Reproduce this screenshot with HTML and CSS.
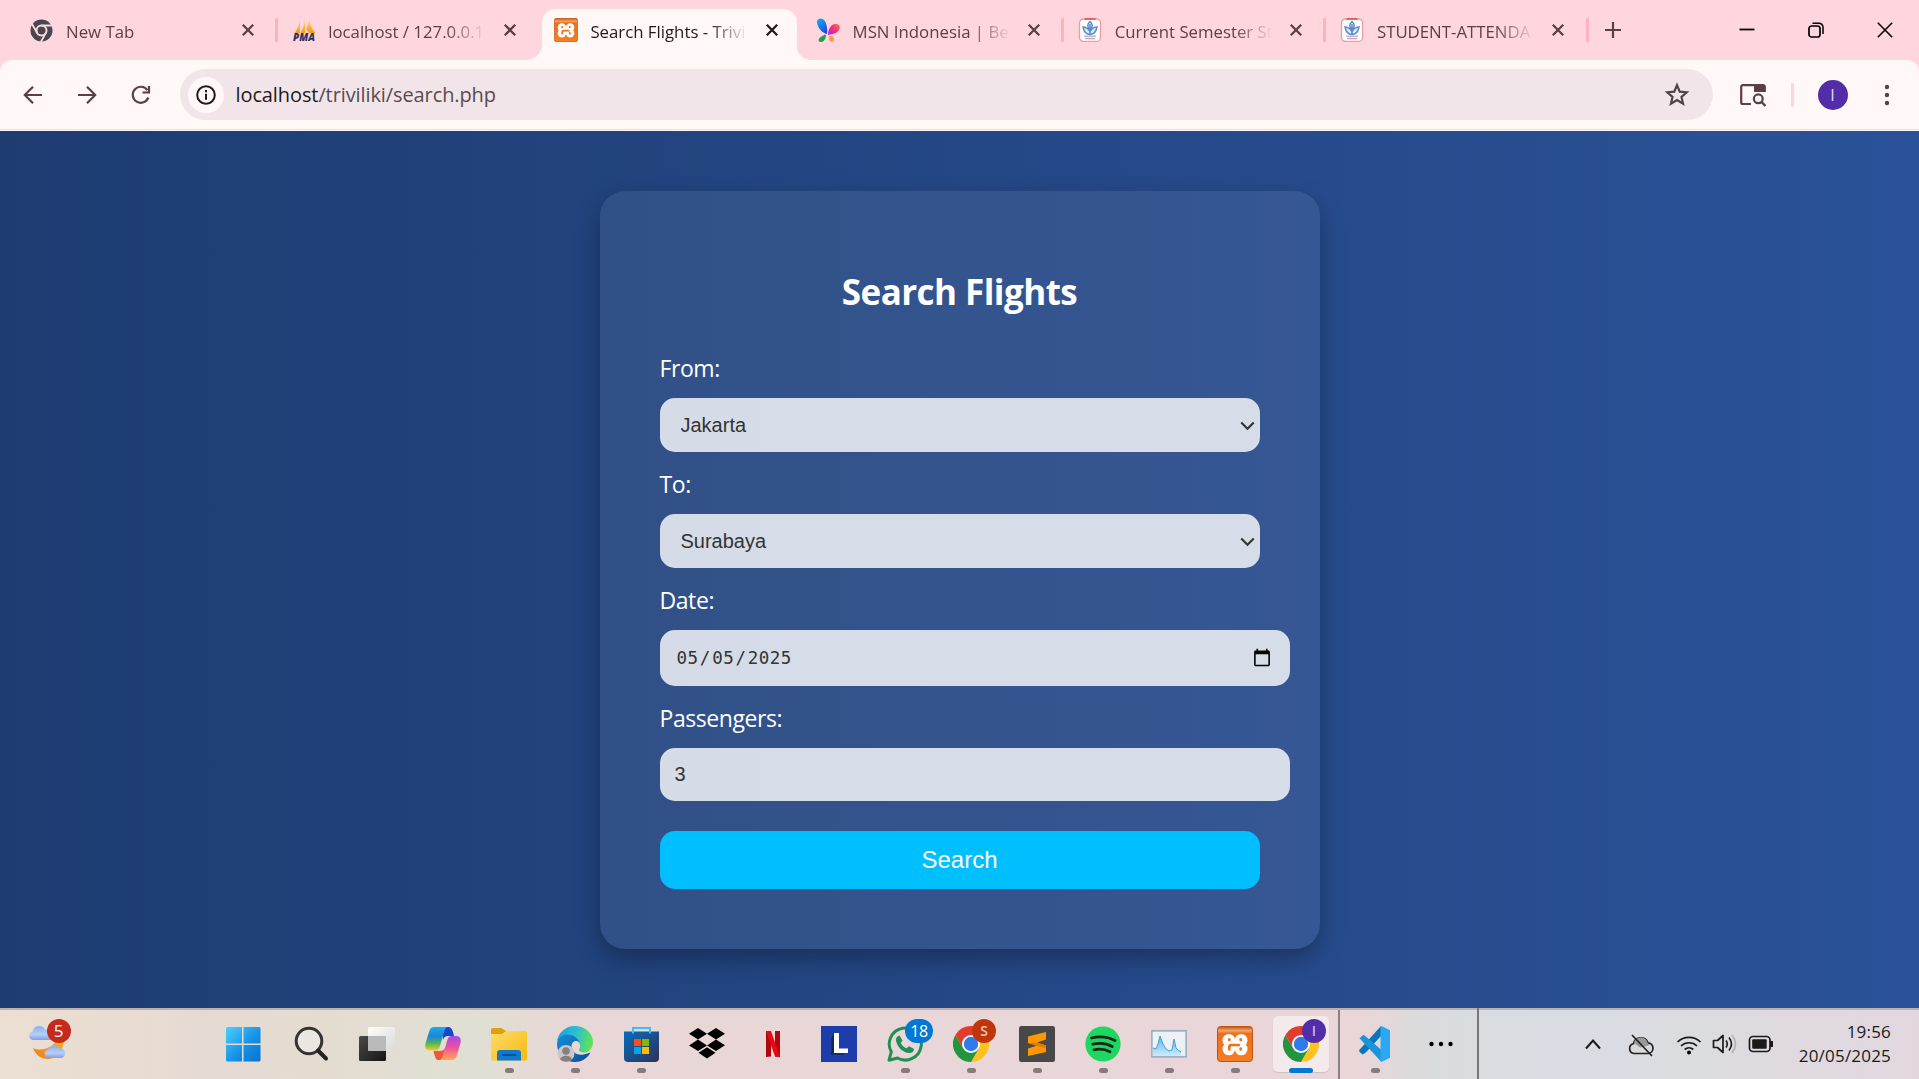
FILE: index.html
```html
<!DOCTYPE html>
<html lang="en">
<head>
<meta charset="utf-8">
<title>Search Flights - Triviliki</title>
<link rel="stylesheet" href="styles.css">
</head>
<body>
<svg class="defs" aria-hidden="true">
  <defs>
    <linearGradient id="xo" x1="0" y1="0" x2="0" y2="1"><stop offset="0" stop-color="#c0560f"/><stop offset=".12" stop-color="#f3a36a"/><stop offset=".2" stop-color="#ee6f1a"/><stop offset="1" stop-color="#f57c24"/></linearGradient>
    <linearGradient id="win" x1="0" y1="0" x2="1" y2="1"><stop offset="0" stop-color="#4fd0ff"/><stop offset=".55" stop-color="#1593e6"/><stop offset="1" stop-color="#0473cf"/></linearGradient>
    <linearGradient id="dark" x1="0" y1="0" x2="1" y2="1"><stop offset="0" stop-color="#4a4a4a"/><stop offset="1" stop-color="#151515"/></linearGradient>
    <linearGradient id="white" x1="0" y1="0" x2="1" y2="1"><stop offset="0" stop-color="#fff"/><stop offset="1" stop-color="#dadada"/></linearGradient>
    <linearGradient id="moon" x1="1" y1="0" x2="0" y2="1"><stop offset="0" stop-color="#f5b829"/><stop offset="1" stop-color="#f07c1c"/></linearGradient>
    <linearGradient id="cloud" x1="0" y1="0" x2="0" y2="1"><stop offset="0" stop-color="#8ab0f2"/><stop offset=".6" stop-color="#b4cff8"/><stop offset="1" stop-color="#7f9fe6"/></linearGradient>
    <linearGradient id="copA" x1="0" y1="0" x2="0" y2="1"><stop offset="0" stop-color="#1fa8f0"/><stop offset=".4" stop-color="#1a86d8"/><stop offset=".7" stop-color="#55b558"/><stop offset="1" stop-color="#f3d01a"/></linearGradient>
    <linearGradient id="copB" x1="0" y1="0" x2="0" y2="1"><stop offset="0" stop-color="#a24be8"/><stop offset=".5" stop-color="#f0529b"/><stop offset="1" stop-color="#ffa94f"/></linearGradient>
    <linearGradient id="fold" x1="0" y1="0" x2="1" y2="1"><stop offset="0" stop-color="#ffdc6b"/><stop offset="1" stop-color="#f8b90e"/></linearGradient>
    <linearGradient id="edgeA" x1="0" y1=".3" x2="1" y2=".5"><stop offset="0" stop-color="#1b9fe0"/><stop offset=".5" stop-color="#2bc0cf"/><stop offset="1" stop-color="#63e34e"/></linearGradient>
    <linearGradient id="edgeB" x1="0" y1="0" x2="1" y2="1"><stop offset="0" stop-color="#1390da"/><stop offset="1" stop-color="#0c4a94"/></linearGradient>
    <linearGradient id="store" x1="0" y1="0" x2="1" y2="1"><stop offset="0" stop-color="#0a6cbd"/><stop offset="1" stop-color="#2b3358"/></linearGradient>
    <linearGradient id="perf" x1="0" y1="0" x2="0" y2="1"><stop offset="0" stop-color="#58b8ee"/><stop offset="1" stop-color="#cdeafb"/></linearGradient>
    <linearGradient id="msnA" x1="0" y1="0" x2=".6" y2="1"><stop offset="0" stop-color="#17b3f0"/><stop offset="1" stop-color="#1d4fe0"/></linearGradient>
    <linearGradient id="msnB" x1="1" y1="0" x2="0" y2="1"><stop offset="0" stop-color="#ff7a35"/><stop offset=".5" stop-color="#ee2f86"/><stop offset="1" stop-color="#b21fd8"/></linearGradient>
    <linearGradient id="sail" x1="0" y1="0" x2="0" y2="1"><stop offset="0" stop-color="#fbd9b0"/><stop offset="1" stop-color="#f89c0e"/></linearGradient>
  </defs>
  <symbol id="x" viewBox="0 0 14 14"><path d="M1.8 1.8 12.2 12.2M12.2 1.8 1.8 12.2" fill="none" stroke="currentColor" stroke-width="2.300"/></symbol>
  <symbol id="xampp" viewBox="0 0 36 36"><rect x=".5" y=".5" width="35" height="35" rx="3" fill="url(#xo)" stroke="#bd5510"/><g fill="#fff"><circle cx="11.800" cy="14.300" r="6.300"/><circle cx="24.200" cy="14.300" r="6.300"/><circle cx="11.800" cy="23" r="6.300"/><circle cx="24.200" cy="23" r="6.300"/><path d="M12 13.500h12v10H12z"/></g><path d="M12.300 13.300v.6M23.700 13.300v.6M12.300 23.500v-2.500q0-2 2-2h7.500M23.700 22.500v1" fill="none" stroke="#f0701a" stroke-width="2.700" stroke-linecap="round"/></symbol>
  <symbol id="uni" viewBox="0 0 24 24"><rect x="1.500" y="1" width="21" height="22.500" rx="4" fill="#fff" stroke="#ee9ba3" stroke-width="1.300"/><path d="M6.500 1h11" stroke="#d9534f" stroke-width="1.600"/><path d="M12 3.500c3 2.500 3 5.500 0 8-3-2.500-3-5.500 0-8zM5 9c1 5 4 7.500 7 7.500s6-2.500 7-7.500c-3 0-5 1.500-7 4.500C10 10.500 8 9 5 9zM12 6v11" fill="#dfeaf7" stroke="#5d8cc6" stroke-width="1.500"/><path d="M6 18.200h12" stroke="#8fb0da" stroke-width="1.200"/><path d="M7 20.500h10" stroke="#e59aa3" stroke-width="1.400"/></symbol>
  <symbol id="chrome" viewBox="0 0 36 36"><path d="M18 9h15.600A18 18 0 0 1 18 36l7.800-13.500z" fill="#fcc31e"/><path d="M25.800 22.500 18 36A18 18 0 0 1 2.400 9l7.800 13.500z" fill="#24953f"/><path d="M18 9h15.600A18 18 0 0 0 2.400 9l7.800 13.500z" fill="#e33b2e"/><circle cx="18" cy="18" r="9" fill="#fff"/><circle cx="18" cy="18" r="7.200" fill="#2f7bed"/></symbol>
</svg>

<header class="browser">
  <div class="tabstrip">
    <div class="tab">
      <svg class="favicon" viewBox="0 0 24 24"><circle cx="11.500" cy="12.500" r="11" fill="#45484d"/><circle cx="11.500" cy="12.500" r="5" fill="none" stroke="#ffd6de" stroke-width="2"/><path d="M11.500 7.500h10.500M7.200 15 2 6M15.800 15l-5 9" stroke="#ffd6de" stroke-width="1.800"/></svg>
      <span class="title">New Tab</span><svg class="close"><use href="#x"/></svg>
    </div>
    <div class="tab sep">
      <svg class="favicon" viewBox="0 0 24 24"><path d="M8 2v13H2.500Q7 9 8 2zM13 0v15H8.500Q12.500 8 13 0zM17.500 2q1 7 6 13H17q-3-4-3-4z" fill="url(#sail)"/><text x="1" y="23" textLength="22" lengthAdjust="spacingAndGlyphs" class="pma">PMA</text></svg>
      <span class="title">localhost / 127.0.0.1</span><svg class="close"><use href="#x"/></svg>
    </div>
    <div class="tab active">
      <svg class="favicon"><use href="#xampp"/></svg>
      <span class="title">Search Flights - Trivi</span><svg class="close"><use href="#x"/></svg>
    </div>
    <div class="tab">
      <svg class="favicon" viewBox="0 0 24 24"><path d="M1 5C0 0 6-1 8.500 2.500 11 6 11.500 11 11 16 6 15 2 10 1 5z" fill="url(#msnA)"/><path d="M12 17c0-6 3-10.500 7-11 4-.500 5.500 2 4.500 5-1.500 4-6 5-11.500 6z" fill="url(#msnB)"/><path d="M10 16.500c0 4-2 7.500-5 7.500-4 0-3.500-5 5-7.500z" fill="#1f9e50"/><path d="M13.500 17.500c3 0 5 2 4.500 4.500s-5 2.500-5-1z" fill="#ff9a3c"/></svg>
      <span class="title">MSN Indonesia | Be</span><svg class="close"><use href="#x"/></svg>
    </div>
    <div class="tab sep">
      <svg class="favicon"><use href="#uni"/></svg>
      <span class="title">Current Semester St</span><svg class="close"><use href="#x"/></svg>
    </div>
    <div class="tab sep last">
      <svg class="favicon"><use href="#uni"/></svg>
      <span class="title">STUDENT-ATTENDA</span><svg class="close"><use href="#x"/></svg>
    </div>
    <svg class="newtab" viewBox="0 0 16 16"><path d="M8 0v16M0 8h16" stroke="currentColor" stroke-width="2.200"/></svg>
    <div class="winctl">
      <svg viewBox="0 0 16 16"><path d="M.5 7.500h15" stroke="#000" stroke-width="1.800"/></svg>
      <svg viewBox="0 0 16 16"><rect x="1" y="4" width="11" height="11" rx="2.500" fill="none" stroke="#000" stroke-width="1.700"/><path d="M4.500 1.200H11a4 4 0 0 1 4 4V12" fill="none" stroke="#000" stroke-width="1.500"/></svg>
      <svg viewBox="0 0 16 16"><path d="M.8.8l14.400 14.400M15.200.8.8 15.200" stroke="#000" stroke-width="1.600"/></svg>
    </div>
  </div>
  <div class="toolbar">
    <svg class="nav" viewBox="0 0 20 20"><path d="M19 10H2.500M10 1.800 1.800 10l8.200 8.200" fill="none" stroke="currentColor" stroke-width="2.200"/></svg>
    <svg class="nav" viewBox="0 0 20 20"><path d="M1 10h16.500M10 1.800l8.200 8.200-8.200 8.200" fill="none" stroke="currentColor" stroke-width="2.200"/></svg>
    <svg class="nav" viewBox="0 0 20 20"><path d="M17.300 12.500A8 8 0 1 1 16.300 5.100M18 1v6.500h-6.500" fill="none" stroke="currentColor" stroke-width="2.200"/></svg>
    <div class="omnibox">
      <span class="info"><svg viewBox="0 0 20 20"><circle cx="10" cy="10" r="8.800" fill="none" stroke="#1f1a1b" stroke-width="2"/><path d="M10 8.800v6M10 5v2.200" stroke="#1f1a1b" stroke-width="2"/></svg></span>
      <span class="url"><b>localhost</b>/triviliki/search.php</span>
      <svg class="star" viewBox="0 0 24 24"><path d="M12 2.900l2.500 6 6.500.6-4.900 4.300 1.500 6.300-5.600-3.400-5.600 3.400 1.500-6.300L3 9.500l6.500-.6z" fill="none" stroke="#4d4246" stroke-width="2"/></svg>
    </div>
    <svg class="lens" viewBox="0 0 26 24"><path d="M11 21H2.800a1.600 1.600 0 0 1-1.600-1.600V3.800a1.600 1.600 0 0 1 1.600-1.600h20.400a1.600 1.600 0 0 1 1.600 1.600V9" fill="none" stroke="currentColor" stroke-width="2.200"/><path d="M14 2h11v7H14z" fill="currentColor"/><circle cx="18.300" cy="15.800" r="4.400" fill="none" stroke="currentColor" stroke-width="2.200"/><path d="M21.500 19l4 4" stroke="currentColor" stroke-width="2.400"/></svg>
    <i class="divider"></i>
    <span class="avatar">I</span>
    <svg class="dots" viewBox="0 0 6 22"><circle cx="3" cy="3" r="2.200"/><circle cx="3" cy="11" r="2.200"/><circle cx="3" cy="19" r="2.200"/></svg>
  </div>
</header>

<main class="page">
  <form class="card">
    <h2>Search Flights</h2>
    <label for="from">From:</label>
    <div class="select"><select id="from"><option>Jakarta</option></select><svg viewBox="0 0 12 8"><path d="M1 1.200l5 5 5-5"/></svg></div>
    <label for="to">To:</label>
    <div class="select"><select id="to"><option>Surabaya</option></select><svg viewBox="0 0 12 8"><path d="M1 1.200l5 5 5-5"/></svg></div>
    <label for="date">Date:</label>
    <input id="date" type="date" value="2025-05-05">
    <label for="pax">Passengers:</label>
    <input id="pax" type="number" value="3">
    <button type="button">Search</button>
  </form>
</main>

<footer class="taskbar">
  <div class="weather">
    <svg width="38" height="44" viewBox="0 0 38 44"><path d="M35 18c1 12-6 23-16 23C11 41 6 36 4 30c8 4 22 0 25-12z" fill="url(#moon)"/><path d="M4 22a4.200 4.200 0 0 1-.4-8.300A6.500 6.500 0 0 1 16 12a5 5 0 0 1 5 10z" fill="url(#cloud)"/><path d="M19.500 40a4.200 4.200 0 0 1-.4-8.300A6.200 6.200 0 0 1 30 30.500a4.900 4.900 0 0 1 2.500 9.500z" fill="url(#cloud)"/></svg>
    <span class="badge red">5</span>
  </div>
  <div class="apps">
    <span class="app start"><svg viewBox="0 0 36 36"><path d="M1 2.500A1.500 1.500 0 0 1 2.500 1H17v16.500H1zM18.500 1H34a1.500 1.500 0 0 1 1.500 1.500v15h-17zM1 19h16v16.500H2.500A1.500 1.500 0 0 1 1 34zM18.500 19h17v15a1.500 1.500 0 0 1-1.500 1.500H18.500z" fill="url(#win)"/></svg></span>
    <span class="app"><svg viewBox="0 0 36 36"><circle cx="16" cy="15" r="12.800" fill="#ece6e0" stroke="#333" stroke-width="3"/><path d="M25 24.500l8 8" stroke="#222" stroke-width="4" stroke-linecap="round"/></svg></span>
    <span class="app"><svg viewBox="0 0 36 36"><rect x="0" y="10" width="27" height="25" rx="1.500" fill="url(#dark)"/><rect x="9" y="1" width="27" height="24" rx="1.500" fill="url(#white)" opacity=".92"/><path d="M9 10h18v15H10.500A1.500 1.500 0 0 1 9 23.500z" fill="#b9b9b9"/></svg></span>
    <span class="app"><svg viewBox="0 0 36 36"><path d="M17 1h6c3 0 4 2 5 5l1 4h-6c-3 0-4 1-5 4z" fill="#1348c9"/><path d="M19 34h-5c-3 0-3.500-2-4.500-5l-1-4h6c3 0 5-1 6-4z" fill="#f2543c"/><path d="M9 1h14c-2 0-3 1.500-4 5l-4 14c-1 4-2.500 4.500-5 4.500H5c-4 0-5.500-3-4.500-7L4 6c1-3.500 2.500-5 5-5z" fill="url(#copA)"/><path d="M27 34H14c2 0 3-1.500 4-5l4-14c1-4 2.500-5 5-5h4c4 0 5.500 3 4.500 7L32 29c-1 3.500-2.500 5-5 5z" fill="url(#copB)"/></svg></span>
    <span class="app run"><svg viewBox="0 0 36 36"><path d="M0 4a2 2 0 0 1 2-2h8.500L15 5v5H0z" fill="#dfa00a"/><path d="M0 8h11l4-3h20a1 1 0 0 1 1 1v27a1.500 1.500 0 0 1-1.500 1.500h-33A1.500 1.500 0 0 1 0 33z" fill="url(#fold)"/><path d="M6 34.500V27a3 3 0 0 1 3-3h18a3 3 0 0 1 3 3v7.500z" fill="#0f78cf"/><path d="M11 29h14" stroke="#0a4f96" stroke-width="2"/></svg></span>
    <span class="app run"><svg viewBox="0 0 36 36"><path d="M0 15A18 18 0 0 1 18 0c10 0 18 7 18 16 0 6-4 10.500-9 10.500-3 0-5-1-5-2.500 0-1 1.200-1.500 1.200-4 0-3-3-6-8-7S4 11 0 15z" fill="url(#edgeA)"/><path d="M0 18c0-6 5-9.500 10-9.500 6 0 11 3.500 12.500 8-3-3-8-1-8 4 0 6 6 9 12 8 3-.5 5-1.500 7-2C30 33 24 36 18 36 8 36 0 28 0 18z" fill="url(#edgeB)"/><circle cx="9" cy="27.500" r="8.500" fill="#c9c6c4"/><circle cx="9" cy="25" r="3.800" fill="#85807d"/><path d="M3 33.500c1-5 11-5 12 0Q9 38 3 33.500z" fill="#85807d"/></svg></span>
    <span class="app run"><svg viewBox="0 0 36 36"><path d="M1 5.500h35V32a4 4 0 0 1-4 4H5a4 4 0 0 1-4-4z" fill="url(#store)"/><path d="M10 7.500V2h17v5.500" fill="none" stroke="#35c2f6" stroke-width="2"/><path d="M11 13h7v7h-7z" fill="#f25022"/><path d="M19 13h7v7h-7z" fill="#7fba00"/><path d="M11 21h7v7h-7z" fill="#00a4ef"/><path d="M19 21h7v7h-7z" fill="#ffb900"/></svg></span>
    <span class="app"><svg viewBox="0 0 36 36"><path d="M9 2l9 5.800-9 5.800-9-5.800zM27 2l9 5.800-9 5.800-9-5.800zM9 13.600l9 5.800-9 5.600-9-5.600zM27 13.600l9 5.600-9 5.800-9-5.600zM9.500 26.800l8.500-5.600 8.500 5.600-8.500 5.600z" fill="#000"/></svg></span>
    <span class="app"><svg viewBox="0 0 36 36"><path d="M11 5h5v25.500l-5 .5zM20 5h5v26l-5-.5z" fill="#b1060f"/><path d="M11 5h5l9 26-5-.5z" fill="#e50914"/></svg></span>
    <span class="app"><svg viewBox="0 0 36 36"><path d="M0 0h36v36H0z" fill="#1d3dab"/><path d="M13 7v19l-2.500 2V12z" fill="#0a2a55"/><path d="M10 28h13" stroke="#07304e" stroke-width="1.500"/><path d="M13 7h5v15.500h9V27H13z" fill="#fff"/></svg></span>
    <span class="app run"><svg viewBox="0 0 36 36"><path d="M2 34.200l2.300-8.400A16 16 0 1 1 10.500 32z" fill="none" stroke="#1f8f56" stroke-width="3" stroke-linejoin="round"/><path d="M12.500 9.500l3 5-1.700 2.400c1.300 2.700 3 4.300 5.800 5.400l2.400-2 5 2.700c0 3-2.700 4.600-5.500 4C15 26 10 20.500 9 14.500c-.2-2.500 1-4.500 3.500-5z" fill="#1f8f56"/></svg><em class="badge blue">18</em></span>
    <span class="app run"><svg><use href="#chrome"/></svg><em class="badge rust">S</em></span>
    <span class="app run"><svg viewBox="0 0 36 36"><rect width="36" height="36" rx="2.500" fill="#484848"/><path d="M27 6v7.500l-9 3 9 3v6.500L9 30v-7.500l8.500-2.700L9 17v-6.500z" fill="#ff9800"/><path d="M9 17l18 5.500v-3l-9-3z" fill="#e47d00"/></svg></span>
    <span class="app run"><svg viewBox="0 0 36 36"><circle cx="18" cy="18" r="17.600" fill="#1ed760"/><path d="M6.500 12c8-2 16-1.500 23.500 2.500M7.800 18.200c7-1.500 13.500-1 19.500 2.300M9 23.800c5.500-1.200 11-.8 16 2" fill="none" stroke="#14291b" stroke-width="2.800" stroke-linecap="round"/></svg></span>
    <span class="app run"><svg viewBox="0 0 36 36"><rect x=".8" y="4.800" width="34.400" height="26" fill="#edf1f5" stroke="#9fb0c0" stroke-width="1.800"/><path d="M2 30V22l3 1 2-5 2-8 3 8 3 5 3 2 3-1 2-11 2 9 2 2 3 2v4z" fill="url(#perf)"/><path d="M2 22l3 1 2-5 2-8 3 8 3 5 3 2 3-1 2-11 2 9 2 2 3 2" fill="none" stroke="#459fd8" stroke-width="1"/></svg></span>
    <span class="app run"><svg><use href="#xampp"/></svg></span>
    <span class="app run current"><svg><use href="#chrome"/></svg><em class="badge violet">I</em></span>
  </div>
  <i class="rule"></i>
  <div class="apps extra">
    <span class="app run"><svg viewBox="0 0 36 36"><path d="M24 0v10L8.500 26.800 5.500 28.500l-3-2.800q-.8-1 0-2z" fill="#0877b9"/><path d="M2.500 12.300 5.500 9.500q1-.8 2.200 0L24.500 24v12z" fill="#1a94da"/><path d="M24.500 0 33 4.200V31.800L24.500 36l-1-1V1z" fill="#2aa9f2"/></svg></span>
    <span class="app"><svg viewBox="0 0 36 36"><circle cx="8.500" cy="18" r="2.200"/><circle cx="18" cy="18" r="2.200"/><circle cx="27.500" cy="18" r="2.200"/></svg></span>
  </div>
  <i class="rule tall"></i>
  <div class="tray">
    <svg class="chev" viewBox="0 0 16 12"><path d="M1 10.500 8 2.500l7 8" fill="none" stroke="#1a1a1a" stroke-width="2"/></svg>
    <svg class="cloud" viewBox="0 0 26 24"><path d="M6 20.500a5 5 0 0 1-.6-9.800A7.700 7.700 0 0 1 20 9.800a5.400 5.400 0 0 1 .5 10.700z" fill="#dadada" stroke="#222" stroke-width="1.700"/><path d="M6 10A7 7 0 0 1 19.500 9.500l1.500 3-9 2z" fill="#999"/><path d="M4 2l20 21" stroke="#222" stroke-width="1.700"/></svg>
    <svg class="wifi" viewBox="0 0 26 24"><path d="M1.500 10a16.500 16.500 0 0 1 23 0M5 14a11.500 11.500 0 0 1 16 0M8.700 17.500a6.500 6.500 0 0 1 8.600 0" fill="none" stroke="#1a1a1a" stroke-width="1.700"/><circle cx="13" cy="20.500" r="2"/></svg>
    <svg class="vol" viewBox="0 0 26 24"><path d="M1.500 8.500h4L11 3.500v17l-5.500-5h-4z" fill="none" stroke="#1a1a1a" stroke-width="1.700" stroke-linejoin="round"/><path d="M14 8.500q2.500 3.500 0 7M17 5.500q5 6.500 0 13" fill="none" stroke="#1a1a1a" stroke-width="1.600"/><path d="M20 3q7 9 0 18" fill="none" stroke="#b0b0b3" stroke-width="1.500"/></svg>
    <svg class="bat" viewBox="0 0 26 24"><rect x="1.500" y="4.500" width="20.500" height="15" rx="3.500" fill="none" stroke="#1a1a1a" stroke-width="1.700"/><rect x="4.200" y="7.200" width="14.500" height="9.600" rx="1" fill="#1a1a1a"/><path d="M23.500 9v6" stroke="#1a1a1a" stroke-width="3"/></svg>
    <div class="clock"><span>19:56</span><span>20/05/2025</span></div>
  </div>
</footer>
</body>
</html>
```
FILE: styles.css
```css
* { box-sizing: border-box; }
html, body { height: 100%; margin: 0; }
body {
  display: flex;
  flex-direction: column;
  width: 1919px;
  height: 1079px;
  overflow: hidden;
  font-family: "Open Sans", "Noto Sans", sans-serif;
}
svg { display: block; flex: none; }
.defs { position: absolute; width: 0; height: 0; }

/* Browser chrome */
.browser { flex: none; height: 131px; background: #ffd6de; color: #5a3f46; }
.tabstrip { display: flex; height: 60px; padding-left: 14.5px; }
.tab {
  position: relative;
  display: flex;
  align-items: flex-start;
  width: 262.200px;
  padding: 18px 0 0 15px;
}
.tab.sep::before, .tab.last::after {
  content: "";
  position: absolute;
  left: -2px;
  top: 18px;
  width: 3px;
  height: 24px;
  border-radius: 1px;
  background: #ffb1be;
}
.tab.last::after { left: auto; right: -1px; }
.favicon { width: 24px; height: 24px; }
.pma { font: italic 800 10px "Open Sans", sans-serif; fill: #2d3364; }
.title {
  width: 158px;
  margin: 1px 13px 0 12.500px;
  white-space: nowrap;
  font-size: 16.800px;
  line-height: 26px;
  -webkit-mask-image: linear-gradient(to right, #000 118px, transparent 158px);
  mask-image: linear-gradient(to right, #000 118px, transparent 158px);
}
.close { width: 14px; height: 14px; margin: 5px 0 0 3.500px; }
.tab.active { color: #1f1a1b; }
.tab.active::before {
  content: "";
  position: absolute;
  inset: 9px 4.500px 0 3.500px;
  border-radius: 14px 14px 0 0;
  background: #fff8f6;
}
.tab.active::after {
  content: "";
  position: absolute;
  left: -11.500px;
  right: -10px;
  bottom: 0;
  height: 15px;
  background:
    radial-gradient(circle at 0 0, transparent 14.500px, #fff8f6 15px) left / 15px 15px no-repeat,
    radial-gradient(circle at 100% 0, transparent 14.500px, #fff8f6 15px) right / 15px 15px no-repeat;
}
.tab.active > * { position: relative; z-index: 1; }
.newtab { width: 16px; height: 16px; margin: 22px 0 0 17px; }
.winctl { display: flex; gap: 53px; margin: 21.500px 26px 0 auto; }
.winctl svg { width: 16px; height: 16px; }

.toolbar {
  display: flex;
  align-items: center;
  height: 71px;
  padding: 0 29px 2px 23px;
  border-radius: 12px 12px 0 0;
  background: linear-gradient(#fff8f6 69px, #ffd6de 69px, #ffd6de 70px, #fff8f6 70px);
}
.nav { width: 20px; height: 20px; margin-right: 34px; }
.omnibox {
  display: flex;
  align-items: center;
  width: 1533px;
  height: 51px;
  margin-left: -5px;
  padding: 0 23px 0 7.500px;
  border-radius: 26px;
  background: #f2e5e9;
}
.info {
  display: grid;
  place-items: center;
  width: 36px;
  height: 36px;
  border-radius: 50%;
  background: #fff8f6;
}
.info svg { width: 20px; height: 20px; }
.url { margin-left: 12px; font-size: 20px; letter-spacing: -.1px; color: #5a4a4f; }
.url b { font-weight: 400; color: #1f1a1b; }
.star { width: 26px; height: 26px; margin-left: auto; }
.lens { width: 26px; height: 24px; margin-left: 27px; }
.divider { width: 3px; height: 24px; margin-left: 25px; border-radius: 1px; background: #ffd6de; }
.avatar {
  width: 30px;
  height: 30px;
  margin-left: 23.500px;
  border-radius: 50%;
  background: #512da8;
  color: #e5dcf6;
  font-size: 16px;
  line-height: 30px;
  text-align: center;
}
.dots { width: 6px; height: 22px; margin-left: auto; fill: #5a3f46; }

/* Web page, shown at 125% */
.page {
  flex: none;
  height: 877px;
  padding-top: 60px;
  background: linear-gradient(to right, #1e3c72, #2a5298);
}
.card {
  zoom: 1.25;
  display: flex;
  flex-direction: column;
  width: 576px;
  height: 606.400px;
  margin: 0 auto;
  padding: 61.600px 48px 48px;
  border-radius: 20px;
  background: rgba(255, 255, 255, .07);
  box-shadow: 0 8px 20px rgba(0, 0, 0, .3);
  color: #fff;
}
h2 { margin: 0 0 28px; font-size: 28px; line-height: 38.400px; letter-spacing: -.44px; text-align: center; }
label { height: 25.600px; padding-top: .8px; font-size: 18.400px; line-height: 25.600px; letter-spacing: -.34px; }
select, input {
  flex: none;
  margin: 12px 0;
  padding: 0 12px;
  border: 0;
  border-radius: 12px;
  background-color: rgba(255, 255, 255, .8);
  color: #333;
  font: 16px "Liberation Sans", Arial, sans-serif;
}
.select { position: relative; width: 480px; height: 43.200px; margin: 12px 0; }
.select select { width: 100%; height: 100%; margin: 0; padding: 0 16.800px; appearance: none; }
.select svg {
  position: absolute;
  right: 3.600px;
  top: 18.200px;
  width: 12px;
  height: 8px;
  fill: none;
  stroke: #333;
  stroke-width: 1.700;
}
input { width: 504px; height: 44.800px; }
input[type="date"] { padding-left: 12.600px; font: 14px "DejaVu Sans Mono", monospace; letter-spacing: .4px; }
input::-webkit-calendar-picker-indicator { width: 16px; height: 16px; }
input[type="number"] { height: 42.400px; margin-bottom: 24px; }
button {
  flex: none;
  width: 480px;
  height: 46.400px;
  border: 0;
  border-radius: 12px;
  background: #00bfff;
  color: #fff;
  font: 19.200px "Liberation Sans", Arial, sans-serif;
}

/* Taskbar */
.taskbar {
  display: flex;
  flex: none;
  height: 71px;
  border-top: 2px solid #bab1b0;
  background: linear-gradient(to right, #ebdfd3 0, #e8dcd2 150px, #e5dad3 200px, #e4dcd1 330px, #e0dfd3 480px, #e4dbd3 530px, #e9d6d7 570px, #ead6d9 1300px, #ead5d7 1360px, #dcdadb 1410px, #d8dcdf 1460px, #dadce4 1600px, #dadce0 1690px, #e0d9df 1800px, #e2d7df 1919px);
}
.weather { position: relative; width: 212px; padding: 8px 0 0 29px; }
.badge {
  position: absolute;
  left: 34.500px;
  top: 8.500px;
  min-width: 24px;
  height: 24px;
  border-radius: 12px;
  color: #fff;
  font-style: normal;
  font-size: 17px;
  line-height: 24px;
  text-align: center;
}
.red { left: 46.500px; background: #c42b1c; }
.blue { left: 27px; width: 28px; background: #0078d4; font-size: 16px; letter-spacing: -.5px; }
.rust { background: #bf360c; color: #f3c5b8; font-size: 14px; font-weight: 600; }
.violet { background: #512da8; color: #c9b9e8; font-size: 14px; font-weight: 600; }
.apps { display: flex; }
.app { position: relative; display: flex; justify-content: center; width: 66px; padding-top: 16px; }
.app svg { position: relative; width: 36px; height: 36px; }
.app.start { padding-right: 4px; }
.app .badge { left: auto; right: 0; z-index: 1; }
.app .blue { right: 5px; }
.app .rust, .app .violet { right: 8px; }
.run::after {
  content: "";
  position: absolute;
  left: 28.500px;
  top: 58px;
  width: 9px;
  height: 5px;
  border-radius: 2.500px;
  background: #857a7c;
}
.current::before {
  content: "";
  position: absolute;
  left: 5px;
  top: 6px;
  width: 56px;
  height: 56px;
  border-radius: 5px;
  background: #f4eaec;
  box-shadow: 0 1px 1px #cfc0c3;
}
.current::after { left: 21px; width: 24px; background: #0078d4; }
.rule { width: 2px; margin-left: 4px; background: #8a8083; }
.rule.tall { margin: -2px 0 0 3px; background: #77787b; }
.extra { margin-left: 2px; }
.tray { display: flex; flex: 1; align-items: center; padding: 0 28px 0 105.500px; }
.tray svg { width: 26px; height: 24px; }
.tray .chev { width: 16px; height: 12px; margin-top: -2px; }
.tray .cloud { margin-left: 27px; }
.tray .wifi { margin: -1px 0 0 22.500px; }
.tray .vol { margin: -1px 0 0 10px; }
.tray .bat { margin: -1px 0 0 10px; }
.clock { display: flex; flex-direction: column; align-items: flex-end; margin: -2px 0 0 auto; font-size: 17px; line-height: 24px; letter-spacing: .2px; color: #1a1a1a; }
```
